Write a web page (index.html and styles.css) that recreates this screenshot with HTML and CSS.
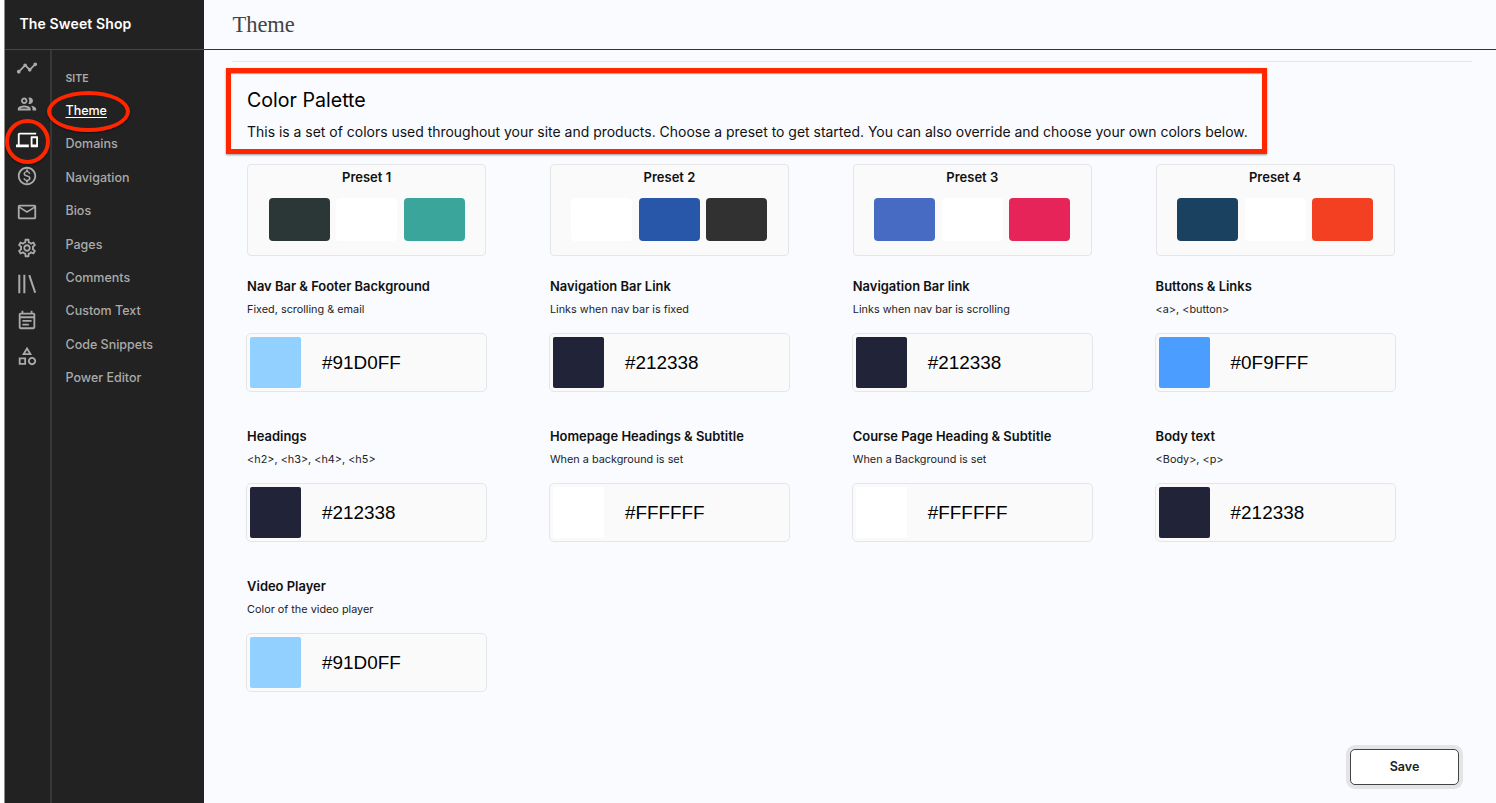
FILE: index.html
```html
<!DOCTYPE html>
<html lang="en">
<head>
<meta charset="utf-8">
<title>The Sweet Shop - Theme</title>
<link rel="stylesheet" href="styles.css">
</head>
<body>
<div class="app">
  <aside class="sidebar">
    <div class="brand">The Sweet Shop</div>
    <div class="sidebar-body">
      <nav class="rail">
        <a class="rail-item"><svg viewBox="0 0 24 24"><path d="M23 8c0 1.1-.9 2-2 2-.18 0-.35-.02-.51-.07l-3.56 3.55c.05.16.07.34.07.52 0 1.1-.9 2-2 2s-2-.9-2-2c0-.18.02-.36.07-.52l-2.55-2.55c-.16.05-.34.07-.52.07s-.36-.02-.52-.07l-4.55 4.56c.05.16.07.33.07.51 0 1.1-.9 2-2 2s-2-.9-2-2 .9-2 2-2c.18 0 .35.02.51.07l4.56-4.55C8.02 9.36 8 9.18 8 9c0-1.1.9-2 2-2s2 .9 2 2c0 .18-.02.36-.07.52l2.55 2.55c.16-.05.34-.07.52-.07s.36.02.52.07l3.55-3.56C19.02 8.35 19 8.18 19 8c0-1.1.9-2 2-2s2 .9 2 2z"/></svg></a>
        <a class="rail-item"><svg viewBox="0 0 24 24"><path d="M9 13.75c-2.34 0-7 1.17-7 3.5V19h14v-1.75c0-2.33-4.66-3.5-7-3.5zM4.34 17c.84-.58 2.87-1.25 4.66-1.25s3.82.67 4.66 1.25H4.34zM9 12c1.93 0 3.5-1.57 3.5-3.5S10.930 5 9 5 5.500 6.570 5.500 8.500 7.070 12 9 12zm0-5c.83 0 1.500.67 1.500 1.500S9.830 10 9 10s-1.500-.67-1.500-1.500S8.170 7 9 7zm7.040 6.810c1.160.84 1.960 1.960 1.960 3.440V19h4v-1.750c0-2.020-3.500-3.170-5.960-3.440zM15 12c1.930 0 3.500-1.570 3.500-3.500S16.930 5 15 5c-.54 0-1.040.13-1.500.35.63.89 1 1.980 1 3.150s-.37 2.260-1 3.150c.46.22.96.35 1.500.35z"/></svg></a>
        <a class="rail-item rail-item-active"><svg viewBox="0 0 24 24"><path d="M4 6h18V4H4c-1.100 0-2 .9-2 2v11H0v3h14v-3H4V6zm19 2h-6c-.55 0-1 .45-1 1v10c0 .55.45 1 1 1h6c.55 0 1-.45 1-1V9c0-.55-.45-1-1-1zm-1 9h-4v-7h4v7z"/></svg><span class="mark mark-circle"></span></a>
        <a class="rail-item"><svg viewBox="0 0 24 24"><path d="M12 2C6.480 2 2 6.480 2 12s4.480 10 10 10 10-4.480 10-10S17.520 2 12 2zm0 18c-4.410 0-8-3.590-8-8s3.590-8 8-8 8 3.590 8 8-3.590 8-8 8zm.31-8.860c-1.770-.45-2.340-.94-2.340-1.670 0-.84.79-1.430 2.100-1.430 1.380 0 1.900.66 1.940 1.640h1.710c-.05-1.340-.87-2.570-2.490-2.970V5H10.900v1.690c-1.510.32-2.720 1.300-2.720 2.810 0 1.790 1.490 2.690 3.660 3.210 1.950.46 2.340 1.150 2.340 1.870 0 .53-.39 1.390-2.100 1.390-1.600 0-2.230-.72-2.320-1.640H8.040c.1 1.700 1.360 2.660 2.860 2.970V19h2.340v-1.670c1.520-.29 2.720-1.160 2.730-2.770-.01-2.200-1.900-2.960-3.660-3.420z"/></svg></a>
        <a class="rail-item"><svg viewBox="0 0 24 24"><path d="M22 6c0-1.100-.9-2-2-2H4c-1.100 0-2 .9-2 2v12c0 1.100.9 2 2 2h16c1.100 0 2-.9 2-2V6zm-2 0l-8 5-8-5h16zm0 12H4V8l8 5 8-5v10z"/></svg></a>
        <a class="rail-item"><svg viewBox="0 0 24 24"><path d="M19.430 12.980c.04-.32.07-.64.07-.98 0-.34-.03-.66-.07-.98l2.110-1.650c.19-.15.24-.42.12-.64l-2-3.460c-.09-.16-.26-.25-.44-.25-.06 0-.12.01-.17.03l-2.490 1c-.52-.4-1.080-.73-1.690-.98l-.38-2.650C14.460 2.180 14.250 2 14 2h-4c-.25 0-.46.18-.49.42l-.38 2.650c-.61.25-1.170.59-1.690.98l-2.490-1c-.06-.02-.12-.03-.18-.03-.17 0-.34.09-.43.25l-2 3.460c-.13.22-.07.49.12.64l2.110 1.650c-.04.32-.07.65-.07.98 0 .33.03.66.07.98l-2.110 1.650c-.19.15-.24.42-.12.64l2 3.460c.09.16.26.25.44.25.06 0 .12-.01.17-.03l2.490-1c.52.4 1.080.73 1.690.98l.38 2.650c.03.24.24.42.49.42h4c.25 0 .46-.18.49-.42l.38-2.650c.61-.25 1.170-.59 1.690-.98l2.490 1c.06.02.12.03.18.03.17 0 .34-.09.43-.25l2-3.460c.12-.22.07-.49-.12-.64l-2.110-1.650zm-1.980-1.710c.04.31.05.52.05.73 0 .21-.02.43-.05.73l-.14 1.130.89.7 1.080.84-.7 1.210-1.270-.51-1.040-.42-.9.68c-.43.32-.84.56-1.250.73l-1.060.43-.16 1.130-.2 1.350h-1.400l-.19-1.350-.16-1.130-1.060-.43c-.43-.18-.83-.41-1.230-.71l-.91-.7-1.060.43-1.270.51-.7-1.210 1.080-.84.89-.7-.14-1.130c-.03-.31-.05-.54-.05-.74s.02-.43.05-.73l.14-1.130-.89-.7-1.080-.84.7-1.210 1.270.51 1.040.42.9-.68c.43-.32.84-.56 1.250-.73l1.060-.43.16-1.130.2-1.350h1.390l.19 1.350.16 1.130 1.060.43c.43.18.83.41 1.230.71l.91.7 1.060-.43 1.270-.51.7 1.210-1.070.85-.89.7.14 1.130zM12 8c-2.210 0-4 1.790-4 4s1.790 4 4 4 4-1.790 4-4-1.790-4-4-4zm0 6c-1.100 0-2-.9-2-2s.9-2 2-2 2 .9 2 2-.9 2-2 2z"/></svg></a>
        <a class="rail-item"><svg viewBox="0 0 24 24"><path d="M2.500 2h2.200v20H2.500zM8 2h2.200v20H8zM13.400 2.600l2.100-.6L22 21.200l-2.100.6z"/></svg></a>
        <a class="rail-item"><svg viewBox="0 0 24 24"><path d="M19 4h-1V2h-2v2H8V2H6v2H5c-1.110 0-1.990.9-1.990 2L3 20c0 1.100.89 2 2 2h14c1.100 0 2-.9 2-2V6c0-1.100-.9-2-2-2zm0 16H5V10h14v10zm0-12H5V6h14v2zM7 12h10v2H7zm0 4h7v2H7z"/></svg></a>
        <a class="rail-item"><svg viewBox="0 0 24 24"><path d="M12 2l-5.500 9h11L12 2zm0 3.840L13.930 9h-3.870L12 5.840zM17.500 13c-2.490 0-4.500 2.010-4.500 4.500s2.010 4.500 4.500 4.500 4.500-2.010 4.500-4.500-2.010-4.500-4.500-4.500zm0 7c-1.380 0-2.500-1.120-2.500-2.500s1.120-2.500 2.500-2.500 2.500 1.120 2.500 2.500-1.120 2.500-2.500 2.500zM3 21.500h8v-8H3v8zm2-6h4v4H5v-4z"/></svg></a>
      </nav>
      <nav class="menu">
        <div class="menu-title">SITE</div>
        <a class="menu-item menu-item-active">Theme<span class="mark mark-ellipse"></span></a>
        <a class="menu-item">Domains</a>
        <a class="menu-item">Navigation</a>
        <a class="menu-item">Bios</a>
        <a class="menu-item">Pages</a>
        <a class="menu-item">Comments</a>
        <a class="menu-item">Custom Text</a>
        <a class="menu-item">Code Snippets</a>
        <a class="menu-item">Power Editor</a>
      </nav>
    </div>
  </aside>
  <main class="main">
    <header class="topbar"><h1 class="page-title">Theme</h1></header>
    <div class="content">
      <section class="intro">
        <h2 class="intro-title">Color Palette</h2>
        <p class="intro-text">This is a set of colors used throughout your site and products. Choose a preset to get started. You can also override and choose your own colors below.</p>
      </section>
      <section class="presets">
        <div class="preset"><div class="preset-name">Preset 1</div><div class="chips"><i class="chip c-pine"></i><i class="chip c-white"></i><i class="chip c-teal"></i></div></div>
        <div class="preset"><div class="preset-name">Preset 2</div><div class="chips"><i class="chip c-white"></i><i class="chip c-blue"></i><i class="chip c-coal"></i></div></div>
        <div class="preset"><div class="preset-name">Preset 3</div><div class="chips"><i class="chip c-iris"></i><i class="chip c-white"></i><i class="chip c-rose"></i></div></div>
        <div class="preset"><div class="preset-name">Preset 4</div><div class="chips"><i class="chip c-navy"></i><i class="chip c-white"></i><i class="chip c-orange"></i></div></div>
      </section>
      <section class="fields">
        <div class="field"><h3 class="field-name">Nav Bar &amp; Footer Background</h3><p class="field-note">Fixed, scrolling &amp; email</p><div class="picker"><i class="swatch c-sky"></i><span class="hex">#91D0FF</span></div></div>
        <div class="field"><h3 class="field-name">Navigation Bar Link</h3><p class="field-note">Links when nav bar is fixed</p><div class="picker"><i class="swatch c-ink"></i><span class="hex">#212338</span></div></div>
        <div class="field"><h3 class="field-name">Navigation Bar link</h3><p class="field-note">Links when nav bar is scrolling</p><div class="picker"><i class="swatch c-ink"></i><span class="hex">#212338</span></div></div>
        <div class="field"><h3 class="field-name">Buttons &amp; Links</h3><p class="field-note">&lt;a&gt;, &lt;button&gt;</p><div class="picker"><i class="swatch c-azure"></i><span class="hex">#0F9FFF</span></div></div>
        <div class="field"><h3 class="field-name">Headings</h3><p class="field-note">&lt;h2&gt;, &lt;h3&gt;, &lt;h4&gt;, &lt;h5&gt;</p><div class="picker"><i class="swatch c-ink"></i><span class="hex">#212338</span></div></div>
        <div class="field"><h3 class="field-name">Homepage Headings &amp; Subtitle</h3><p class="field-note">When a background is set</p><div class="picker"><i class="swatch c-white"></i><span class="hex">#FFFFFF</span></div></div>
        <div class="field"><h3 class="field-name">Course Page Heading &amp; Subtitle</h3><p class="field-note">When a Background is set</p><div class="picker"><i class="swatch c-white"></i><span class="hex">#FFFFFF</span></div></div>
        <div class="field"><h3 class="field-name">Body text</h3><p class="field-note">&lt;Body&gt;, &lt;p&gt;</p><div class="picker"><i class="swatch c-ink"></i><span class="hex">#212338</span></div></div>
        <div class="field"><h3 class="field-name">Video Player</h3><p class="field-note">Color of the video player</p><div class="picker"><i class="swatch c-sky"></i><span class="hex">#91D0FF</span></div></div>
      </section>
      <div class="actions"><button class="save">Save</button></div>
    </div>
  </main>
</div>
</body>
</html>
```

FILE: styles.css
```css
* { box-sizing: border-box; margin: 0; padding: 0; }
body { background: #f9fbff; font-family: Inter, "Liberation Sans", sans-serif; color: #111; }
.app { display: flex; height: 803px; border-left: 4px solid #fff; overflow: hidden; }

/* Sidebar */
.sidebar { width: 200.400px; flex: none; display: flex; flex-direction: column; background: #222; color: #aaa; border-left: 1px solid #8c8c8c; }
.brand { height: 50px; flex: none; border-bottom: 1px solid #484848; padding-left: 14.500px; line-height: 48px; font-size: 14px; font-weight: 600; letter-spacing: 0.120px; color: #fff; }
.sidebar-body { flex: 1; display: flex; }
.rail { width: 47px; border-right: 2px solid #373737; padding-right: 2px; margin-top: -0.500px; }
.rail-item { position: relative; height: 36px; display: flex; align-items: center; justify-content: center; color: #aaa; }
.rail-item svg { width: 22px; height: 22px; fill: currentColor; }
.rail-item-active { color: #fff; }
.menu { flex: 1; padding: 17px 0 0 13.500px; font-size: 12.500px; font-weight: 500; }
.menu-title { height: 27px; line-height: 23px; font-size: 10.500px; font-weight: 600; }
.menu-item { position: relative; display: block; width: max-content; height: 33.400px; line-height: 33.400px; }
.menu-item-active { color: #fff; text-decoration: underline; text-underline-offset: 2px; }

/* Highlight outlines drawn over the navigation */
.mark { position: absolute; border: 4px solid #ff2600; border-radius: 50%; box-shadow: 0 1px 2px rgba(0,0,0,.5); }
.mark-circle { width: 45px; height: 45px; left: 0; top: -3px; }
.mark-ellipse { width: 83px; height: 41px; left: -19px; top: -3px; }

/* Main column */
.main { flex: 1; min-width: 0; display: flex; flex-direction: column; }
.topbar { height: 50px; flex: none; border-bottom: 1px solid #333; padding-left: 28px; }
.page-title { font: 400 22.500px/50px "Liberation Serif", serif; color: #444; }
.content { flex: 1; margin: 11px 24px 0 28px; border-top: 1px solid #e4e5e8; }
.intro { width: 1041px; height: 86px; margin: 6px 0 0 -6.400px; padding: 15px 16px 0; border: 5px solid #ff2600; box-shadow: 0 1px 2px rgba(0,0,0,.4), inset 0 1px 1px rgba(0,0,0,.35); }
.intro-title { font-size: 19.600px; font-weight: 400; line-height: 24px; color: #000; }
.intro-text { margin-top: 9px; font-size: 13.960px; line-height: 22px; white-space: nowrap; color: #111; }
.presets, .fields { display: grid; grid-template-columns: repeat(4, 239px); column-gap: 63.850px; padding-left: 14.700px; }
.presets { margin-top: 10px; }
.preset { height: 92px; border: 1px solid #e5e6e8; border-radius: 4px; background: #fafafa; }
.preset-name { text-align: center; font-size: 13px; font-weight: 600; line-height: 25px; }
.chips { display: flex; justify-content: center; gap: 6.500px; margin-top: 8px; }
.chip { width: 61px; height: 43px; border-radius: 4px; }
.fields { margin-top: 20px; row-gap: 34.600px; }
.field-name { font-size: 12.950px; font-weight: 600; line-height: 21.500px; }
.field-note { font-size: 10.850px; line-height: 22.500px; color: #222; }
.picker { display: flex; align-items: center; gap: 21px; width: 241px; height: 59px; margin: 12.500px 0 0 -1px; padding-left: 3px; border: 1px solid #e5e6e8; border-radius: 5px; background: #fafafa; }
.swatch { width: 51px; height: 51px; border-radius: 2px; }
.hex { padding-top: 1px; font: 18.900px "Liberation Sans", sans-serif; color: #000; }
.actions { display: flex; justify-content: flex-end; margin: 57px 13px 0 0; }
.save { width: 109px; height: 36px; border: 1px solid #444; border-radius: 5px; background: #fff; box-shadow: 0 0 0 4px #e3e4e6; font: 600 12.500px Inter, sans-serif; color: #222; }

/* Palette colours */
.c-white { background: #fff; }
.c-pine { background: #2b3636; }
.c-teal { background: #3aa59b; }
.c-blue { background: #2856a8; }
.c-coal { background: #313131; }
.c-iris { background: #476bc3; }
.c-rose { background: #e7245a; }
.c-navy { background: #1b4160; }
.c-orange { background: #f44022; }
.c-sky { background: #91d0ff; }
.c-ink { background: #212338; }
.c-azure { background: #4b9dff; }
```
